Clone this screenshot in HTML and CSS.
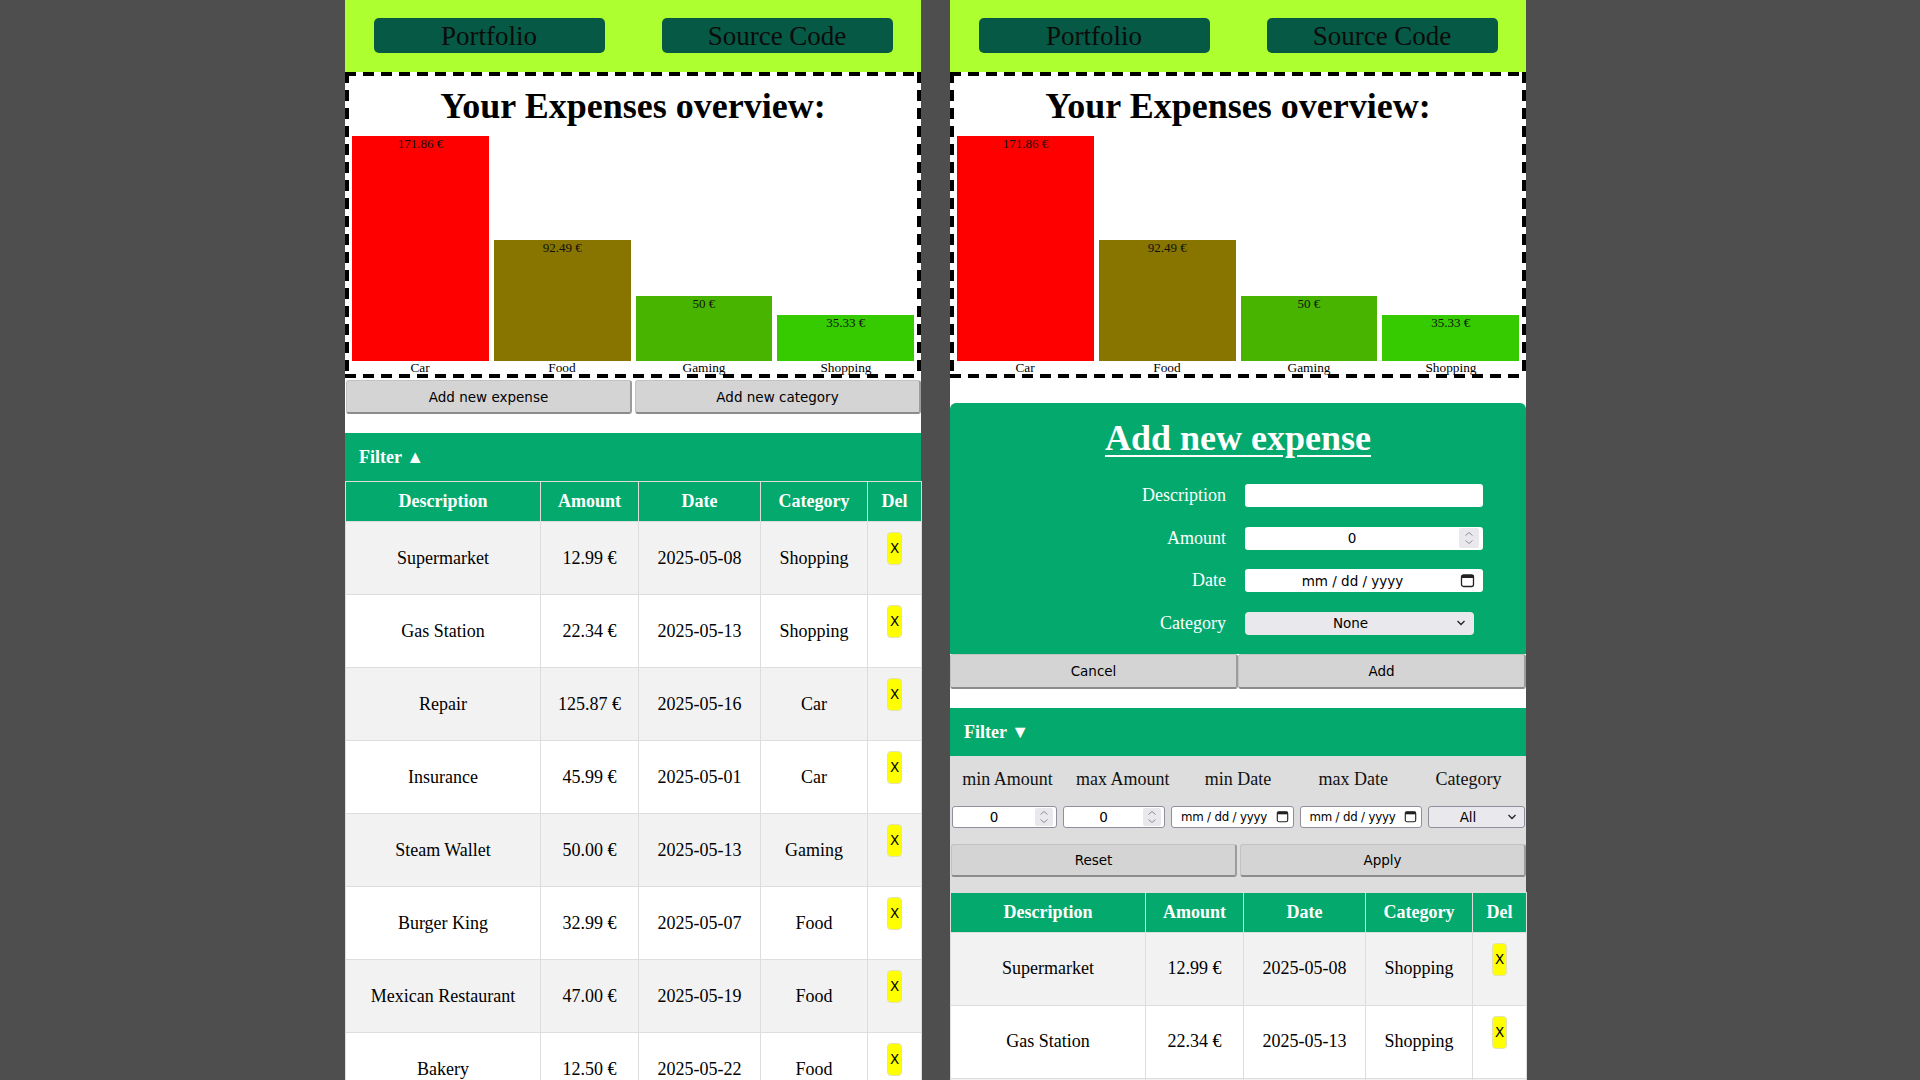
FILE: index.html
```html
<!DOCTYPE html>
<html lang="en">
<head>
<meta charset="utf-8">
<title>Expenses</title>
<link rel="stylesheet" href="styles.css">
</head>
<body>
<div class="stage">

  <!-- LEFT PANEL -->
  <div class="panel">
    <header class="topbar">
      <div class="topcell"><a class="navbtn" href="#">Portfolio</a></div>
      <div class="topcell"><a class="navbtn" href="#">Source Code</a></div>
    </header>
    <section class="overview">
      <h1>Your Expenses overview:</h1>
      <div class="bars">
        <div class="bar-col"><div class="bar car" style="height:100%">171.86 €</div></div>
        <div class="bar-col"><div class="bar food" style="height:53.82%">92.49 €</div></div>
        <div class="bar-col"><div class="bar gaming" style="height:29.09%">50 €</div></div>
        <div class="bar-col"><div class="bar shopping" style="height:20.56%">35.33 €</div></div>
      </div>
      <div class="labels"><span>Car</span><span>Food</span><span>Gaming</span><span>Shopping</span></div>
    </section>
    <div class="actions">
      <button class="btn">Add new expense</button>
      <button class="btn">Add new category</button>
    </div>
    <div class="filterbar">Filter ▲</div>
    <table class="expenses">
      <colgroup><col class="c-desc"><col class="c-amt"><col class="c-date"><col class="c-cat"><col class="c-del"></colgroup>
      <thead><tr><th>Description</th><th>Amount</th><th>Date</th><th>Category</th><th>Del</th></tr></thead>
      <tbody>
        <tr><td>Supermarket</td><td>12.99 €</td><td>2025-05-08</td><td>Shopping</td><td class="del"><button class="xbtn">X</button></td></tr>
        <tr><td>Gas Station</td><td>22.34 €</td><td>2025-05-13</td><td>Shopping</td><td class="del"><button class="xbtn">X</button></td></tr>
        <tr><td>Repair</td><td>125.87 €</td><td>2025-05-16</td><td>Car</td><td class="del"><button class="xbtn">X</button></td></tr>
        <tr><td>Insurance</td><td>45.99 €</td><td>2025-05-01</td><td>Car</td><td class="del"><button class="xbtn">X</button></td></tr>
        <tr><td>Steam Wallet</td><td>50.00 €</td><td>2025-05-13</td><td>Gaming</td><td class="del"><button class="xbtn">X</button></td></tr>
        <tr><td>Burger King</td><td>32.99 €</td><td>2025-05-07</td><td>Food</td><td class="del"><button class="xbtn">X</button></td></tr>
        <tr><td>Mexican Restaurant</td><td>47.00 €</td><td>2025-05-19</td><td>Food</td><td class="del"><button class="xbtn">X</button></td></tr>
        <tr><td>Bakery</td><td>12.50 €</td><td>2025-05-22</td><td>Food</td><td class="del"><button class="xbtn">X</button></td></tr>
      </tbody>
    </table>
  </div>

  <!-- RIGHT PANEL -->
  <div class="panel">
    <header class="topbar">
      <div class="topcell"><a class="navbtn" href="#">Portfolio</a></div>
      <div class="topcell"><a class="navbtn" href="#">Source Code</a></div>
    </header>
    <section class="overview">
      <h1>Your Expenses overview:</h1>
      <div class="bars">
        <div class="bar-col"><div class="bar car" style="height:100%">171.86 €</div></div>
        <div class="bar-col"><div class="bar food" style="height:53.82%">92.49 €</div></div>
        <div class="bar-col"><div class="bar gaming" style="height:29.09%">50 €</div></div>
        <div class="bar-col"><div class="bar shopping" style="height:20.56%">35.33 €</div></div>
      </div>
      <div class="labels"><span>Car</span><span>Food</span><span>Gaming</span><span>Shopping</span></div>
    </section>

    <form class="newexp">
      <h2>Add new expense</h2>
      <div class="formgrid">
        <label>Description</label>
        <input class="txt" type="text">
        <label>Amount</label>
        <div class="field light"><span class="val">0</span>
          <svg class="spin" width="20" height="20" viewBox="0 0 20 20"><rect x="0" y="0" width="20" height="20" rx="2" fill="#e9e9ed"/><path d="M6.5 7.5 L10 4.5 L13.5 7.5" fill="none" stroke="#8d8d92" stroke-width="1"/><path d="M6.5 12.5 L10 15.5 L13.5 12.5" fill="none" stroke="#8d8d92" stroke-width="1"/></svg>
        </div>
        <label>Date</label>
        <div class="field light"><span class="val">mm / dd / yyyy</span>
          <svg class="cal" width="15" height="15" viewBox="0 0 15 15"><rect x="1.5" y="2" width="12" height="11.5" rx="2" fill="none" stroke="#222" stroke-width="1.3"/><rect x="1.5" y="2" width="12" height="3" fill="#222"/></svg>
        </div>
        <label>Category</label>
        <div class="field select"><span class="val">None</span>
          <svg class="chev" width="10" height="6" viewBox="0 0 10 6"><path d="M1.5 1 L5 4.5 L8.5 1" fill="none" stroke="#222" stroke-width="1.3"/></svg>
        </div>
      </div>
    </form>
    <div class="formactions">
      <button class="btn" type="button">Cancel</button>
      <button class="btn" type="button">Add</button>
    </div>

    <div class="filterbar">Filter ▼</div>
    <div class="filters">
      <div class="flabels">
        <span>min Amount</span>
        <span>max Amount</span>
        <span>min Date</span>
        <span>max Date</span>
        <span>Category</span>
      </div>
      <div class="finputs">
        <div class="field bordered"><span class="val">0</span>
          <svg class="spin" width="18" height="18" viewBox="0 0 18 18"><rect x="0" y="0" width="18" height="18" rx="2" fill="#e9e9ed"/><path d="M5.5 6.5 L9 3.5 L12.5 6.5" fill="none" stroke="#8d8d92" stroke-width="1"/><path d="M5.5 11.5 L9 14.5 L12.5 11.5" fill="none" stroke="#8d8d92" stroke-width="1"/></svg>
        </div>
        <div class="field bordered"><span class="val">0</span>
          <svg class="spin" width="18" height="18" viewBox="0 0 18 18"><rect x="0" y="0" width="18" height="18" rx="2" fill="#e9e9ed"/><path d="M5.5 6.5 L9 3.5 L12.5 6.5" fill="none" stroke="#8d8d92" stroke-width="1"/><path d="M5.5 11.5 L9 14.5 L12.5 11.5" fill="none" stroke="#8d8d92" stroke-width="1"/></svg>
        </div>
        <div class="field bordered date"><span class="val">mm / dd / yyyy</span>
          <svg class="cal" width="13" height="13" viewBox="0 0 15 15"><rect x="1.5" y="2" width="12" height="11.5" rx="2" fill="none" stroke="#222" stroke-width="1.3"/><rect x="1.5" y="2" width="12" height="3" fill="#222"/></svg>
        </div>
        <div class="field bordered date"><span class="val">mm / dd / yyyy</span>
          <svg class="cal" width="13" height="13" viewBox="0 0 15 15"><rect x="1.5" y="2" width="12" height="11.5" rx="2" fill="none" stroke="#222" stroke-width="1.3"/><rect x="1.5" y="2" width="12" height="3" fill="#222"/></svg>
        </div>
        <div class="field bordered select"><span class="val">All</span>
          <svg class="chev" width="10" height="6" viewBox="0 0 10 6"><path d="M1.5 1 L5 4.5 L8.5 1" fill="none" stroke="#222" stroke-width="1.3"/></svg>
        </div>
      </div>
      <div class="filteractions">
        <button class="btn" type="button">Reset</button>
        <button class="btn" type="button">Apply</button>
      </div>
    </div>

    <table class="expenses">
      <colgroup><col class="c-desc"><col class="c-amt"><col class="c-date"><col class="c-cat"><col class="c-del"></colgroup>
      <thead><tr><th>Description</th><th>Amount</th><th>Date</th><th>Category</th><th>Del</th></tr></thead>
      <tbody>
        <tr><td>Supermarket</td><td>12.99 €</td><td>2025-05-08</td><td>Shopping</td><td class="del"><button class="xbtn">X</button></td></tr>
        <tr><td>Gas Station</td><td>22.34 €</td><td>2025-05-13</td><td>Shopping</td><td class="del"><button class="xbtn">X</button></td></tr>
        <tr><td>Repair</td><td>125.87 €</td><td>2025-05-16</td><td>Car</td><td class="del"><button class="xbtn">X</button></td></tr>
        <tr><td>Insurance</td><td>45.99 €</td><td>2025-05-01</td><td>Car</td><td class="del"><button class="xbtn">X</button></td></tr>
        <tr><td>Steam Wallet</td><td>50.00 €</td><td>2025-05-13</td><td>Gaming</td><td class="del"><button class="xbtn">X</button></td></tr>
        <tr><td>Burger King</td><td>32.99 €</td><td>2025-05-07</td><td>Food</td><td class="del"><button class="xbtn">X</button></td></tr>
        <tr><td>Mexican Restaurant</td><td>47.00 €</td><td>2025-05-19</td><td>Food</td><td class="del"><button class="xbtn">X</button></td></tr>
        <tr><td>Bakery</td><td>12.50 €</td><td>2025-05-22</td><td>Food</td><td class="del"><button class="xbtn">X</button></td></tr>
      </tbody>
    </table>
  </div>

</div>
</body>
</html>
```
FILE: styles.css
```css
html, body {
  margin: 0;
  padding: 0;
}
body {
  background: #4e4e4e;
  height: 1080px;
  overflow: hidden;
  font-family: "Liberation Serif", "Times New Roman", serif;
  color: #000;
}
.stage {
  display: flex;
  gap: 29px;
  padding-left: 345px;
  height: 100%;
}
.panel {
  flex: none;
  width: 576px;
  background: #fff;
  min-height: 100%;
}

/* top bar */
.topbar {
  box-sizing: border-box;
  height: 72px;
  padding-top: 18px;
  background: #adff2f;
  display: flex;
}
.topcell {
  flex: 1;
  display: flex;
  justify-content: center;
  align-items: flex-start;
}
.navbtn {
  width: 231px;
  height: 35px;
  background: #065944;
  color: #0b0b0b;
  border-radius: 5px;
  font-size: 27px;
  line-height: 36px;
  text-align: center;
  text-decoration: none;
}

/* overview chart: dashed frame drawn with gradients (11px dash, 7px gap) */
.overview {
  padding: 4px;
  background:
    repeating-linear-gradient(90deg, #000 0 11px, transparent 11px 18px) left top / 100% 4px no-repeat,
    repeating-linear-gradient(90deg, #000 0 11px, transparent 11px 18px) left bottom / 100% 4px no-repeat,
    repeating-linear-gradient(180deg, #000 0 11px, transparent 11px 18px) left top / 4px 100% no-repeat,
    repeating-linear-gradient(180deg, #000 0 11px, transparent 11px 18px) right top / 4px 100% no-repeat,
    #fff;
}
.overview h1 {
  margin: 10px 0 0;
  font-size: 36px;
  line-height: 41px;
  font-weight: bold;
  text-align: center;
}
.bars {
  display: flex;
  align-items: flex-end;
  height: 225px;
  margin-top: 9px;
  padding: 0 0.5px;
}
.bar-col {
  flex: 1;
  margin: 0 2.5px;
  height: 100%;
  display: flex;
  flex-direction: column;
  justify-content: flex-end;
}
.bar {
  font-size: 13px;
  line-height: 15px;
  text-align: center;
  color: #111;
}
.bar.car { background: #ff0000; }
.bar.food { background: #877500; }
.bar.gaming { background: #48b400; }
.bar.shopping { background: #35cb00; }
.labels {
  display: flex;
}
.labels span {
  flex: 1;
  text-align: center;
  font-size: 13.33px;
  line-height: 13px;
}

/* generic gray buttons */
.btn {
  flex: 1;
  box-sizing: border-box;
  background: #d4d4d4;
  border: 1px solid #c2c2c2;
  border-right: 2px solid #9c9c9c;
  border-bottom: 2px solid #8c8c8c;
  border-radius: 3px;
  font-family: "DejaVu Sans", "Liberation Sans", sans-serif;
  font-size: 13.5px;
  color: #000;
  padding: 0;
}
.actions {
  display: flex;
  gap: 3px;
  padding-left: 1px;
  margin-top: 2px;
}
.actions .btn { height: 34px; }

/* filter bar */
.filterbar {
  margin-top: 19px;
  height: 48px;
  line-height: 48px;
  padding-left: 14px;
  background: #04aa6d;
  color: #fff;
  font-weight: bold;
  font-size: 18px;
}

/* table */
.expenses {
  width: 100%;
  border-collapse: collapse;
  table-layout: fixed;
  font-size: 18px;
}
.c-desc { width: 195px; }
.c-amt { width: 98px; }
.c-date { width: 122px; }
.c-cat { width: 107px; }
.c-del { width: 54px; }
.expenses th {
  height: 39px;
  padding: 0;
  background: #04aa6d;
  color: #fff;
  font-weight: bold;
  border: 1px solid #ddd;
}
.expenses td {
  height: 72px;
  padding: 0;
  text-align: center;
  border: 1px solid #ddd;
}
.expenses td:nth-child(3) { border-left-color: #ececec; }
.expenses tbody tr:nth-child(odd) { background: #f2f2f2; }
.expenses tbody tr:nth-child(even) { background: #fff; }
.expenses td.del {
  height: 62px;
  vertical-align: top;
  padding-top: 10px;
}
.xbtn {
  display: inline-block;
  background: #ffff00;
  border: 1px solid #e2e2b4;
  border-radius: 4px;
  padding: 9px 2px;
  font-family: "DejaVu Sans", "Liberation Sans", sans-serif;
  font-size: 13.5px;
  line-height: 13px;
  color: #000;
}

/* add new expense form */
.newexp {
  margin: 25px 0 0;
  padding: 15px 0 19px;
  background: #04aa6d;
  border-radius: 6px 6px 0 0;
  color: #fff;
}
.newexp h2 {
  margin: 0;
  font-size: 36px;
  line-height: 41px;
  text-align: center;
  text-decoration: underline;
  text-decoration-thickness: 2px;
  text-underline-offset: 5px;
}
.formgrid {
  margin-top: 25px;
  display: grid;
  grid-template-columns: 276px 238px;
  grid-auto-rows: 23px;
  column-gap: 19px;
  row-gap: 19.5px;
  align-items: center;
}
.formgrid label {
  text-align: right;
  font-size: 18px;
  line-height: 23px;
}
.txt {
  box-sizing: border-box;
  width: 238px;
  height: 23px;
  border: none;
  border-radius: 3px;
  background: #fff;
  margin: 0;
}
.field {
  box-sizing: border-box;
  display: flex;
  align-items: center;
  height: 23px;
  background: #fff;
  border-radius: 3px;
  font-family: "DejaVu Sans", "Liberation Sans", sans-serif;
  font-size: 13.5px;
  color: #000;
  padding-right: 4px;
}
.field .val {
  flex: 1;
  text-align: center;
  white-space: nowrap;
}
.field .cal { margin-right: 4px; }
.field.select {
  width: 229px;
  background: #e9e9ed;
  border-radius: 4px;
  padding-right: 8px;
}
.formactions {
  display: flex;
}
.formactions .btn { height: 35px; }

/* filters */
.filters {
  background: #dddddd;
  padding: 13px 0 15px;
}
.flabels {
  display: flex;
}
.flabels span {
  flex: 1;
  text-align: center;
  font-size: 18px;
  line-height: 21px;
  color: #111;
  white-space: nowrap;
}
.finputs {
  display: grid;
  grid-template-columns: 105px 102px 123px 122px 97px;
  column-gap: 6px;
  padding-left: 2px;
  margin-top: 16px;
}
.field.bordered {
  height: 22px;
  border: 1px solid #8f8f9d;
  border-radius: 3px;
  padding-right: 3px;
}
.field.bordered.date {
  padding-right: 2px;
  font-size: 11.8px;
}
.field.bordered.date .val { letter-spacing: -0.2px; }
.field.bordered.date .cal { margin-right: 2px; }
.field.bordered.select {
  width: auto;
  background: #e9e9ed;
  padding-right: 7px;
}
.filteractions {
  display: flex;
  gap: 3px;
  padding-left: 1px;
  margin-top: 16px;
}
.filteractions .btn { height: 33px; }
```
